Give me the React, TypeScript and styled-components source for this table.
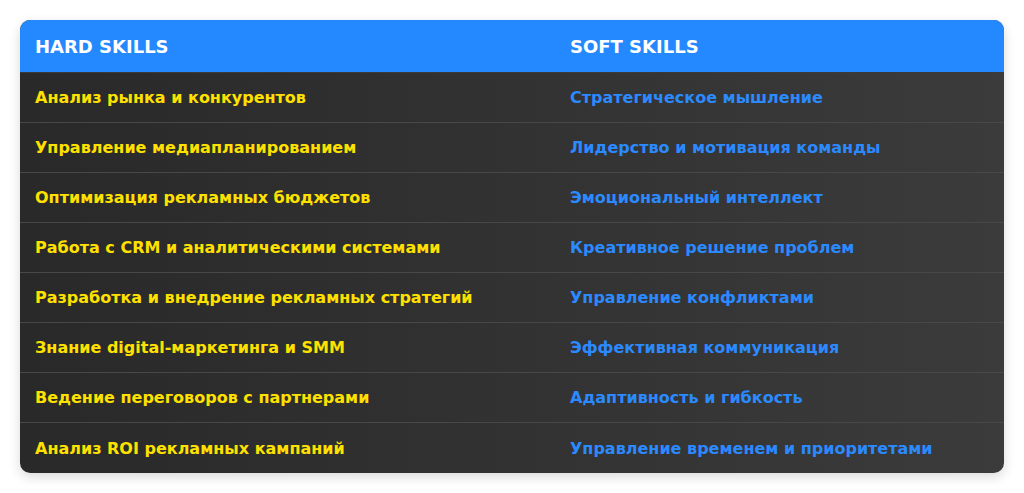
import React from 'react';
import styled, { createGlobalStyle } from 'styled-components';

const GlobalStyle = createGlobalStyle`
  body {
    margin: 0;
    background: #ffffff;
    font-family: 'DejaVu Sans', 'Liberation Sans', sans-serif;
  }
`;

const Page = styled.div`
  padding: 20px;
`;

const Table = styled.div`
  display: grid;
  grid-template-columns: 535px 1fr;
  border-radius: 10px;
  overflow: hidden;
  background: linear-gradient(90deg, #292929 0%, #3b3b3b 100%);
  box-shadow: 0 4px 12px rgba(0, 0, 0, 0.15);
`;

const HeadCell = styled.div`
  background: #2488ff;
  color: #ffffff;
  font-weight: bold;
  font-size: 18px;
  height: 52px;
  padding: 0 15px;
  display: flex;
  align-items: center;
  border-bottom: 1px solid #3a3a3a;
`;

const Cell = styled.div<{ $soft?: boolean; $last?: boolean }>`
  color: ${(p) => (p.$soft ? '#2b8aff' : '#ffe100')};
  font-weight: bold;
  font-size: 16px;
  height: ${(p) => (p.$last ? '50px' : '49px')};
  padding: 0 15px;
  display: flex;
  align-items: center;
  border-bottom: ${(p) => (p.$last ? 'none' : '1px solid #484848')};
`;

const rows: [string, string][] = [
  ['Анализ рынка и конкурентов', 'Стратегическое мышление'],
  ['Управление медиапланированием', 'Лидерство и мотивация команды'],
  ['Оптимизация рекламных бюджетов', 'Эмоциональный интеллект'],
  ['Работа с CRM и аналитическими системами', 'Креативное решение проблем'],
  ['Разработка и внедрение рекламных стратегий', 'Управление конфликтами'],
  ['Знание digital-маркетинга и SMM', 'Эффективная коммуникация'],
  ['Ведение переговоров с партнерами', 'Адаптивность и гибкость'],
  ['Анализ ROI рекламных кампаний', 'Управление временем и приоритетами'],
];

export default function App() {
  return (
    <Page>
      <GlobalStyle />
      <Table>
        <HeadCell>HARD SKILLS</HeadCell>
        <HeadCell>SOFT SKILLS</HeadCell>
        {rows.map(([hard, soft], i) => (
          <React.Fragment key={hard}>
            <Cell $last={i === rows.length - 1}>{hard}</Cell>
            <Cell $soft $last={i === rows.length - 1}>{soft}</Cell>
          </React.Fragment>
        ))}
      </Table>
    </Page>
  );
}
